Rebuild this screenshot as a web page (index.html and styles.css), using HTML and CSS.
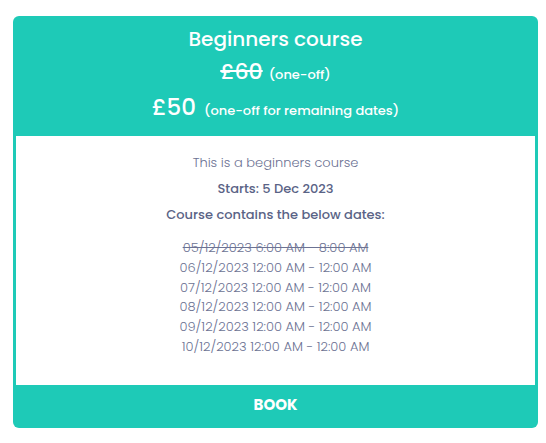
FILE: index.html
```html
<!DOCTYPE html>
<html lang="en">
<head>
    <meta charset="UTF-8">
    <meta name="viewport" content="width=device-width, initial-scale=1.0">
    <title>Beginners course</title>
    <link rel="stylesheet" href="styles.css">
</head>
<body>
    <div class="course-card">
        <div class="course-header">
            <h2 class="course-title">Beginners course</h2>
            <div class="price-row">
                <span class="price old-price">£60</span>
                <span class="price-note">(one-off)</span>
            </div>
            <div class="price-row current">
                <span class="price">£50</span>
                <span class="price-note">(one-off for remaining dates)</span>
            </div>
        </div>

        <div class="course-body">
            <p class="description">This is a beginners course</p>
            <p class="info">Starts: 5 Dec 2023</p>
            <p class="info">Course contains the below dates:</p>
            <ul class="dates">
                <li class="past">05/12/2023 6:00 AM - 8:00 AM</li>
                <li>06/12/2023 12:00 AM - 12:00 AM</li>
                <li>07/12/2023 12:00 AM - 12:00 AM</li>
                <li>08/12/2023 12:00 AM - 12:00 AM</li>
                <li>09/12/2023 12:00 AM - 12:00 AM</li>
                <li>10/12/2023 12:00 AM - 12:00 AM</li>
            </ul>
        </div>

        <button class="book-btn">BOOK</button>
    </div>
</body>
</html>
```

FILE: styles.css
```css
* {
    box-sizing: border-box;
}

body {
    font-family: 'Poppins', 'Inter', 'Noto Sans', sans-serif;
    background: #fff;
    margin: 0;
    padding: 16px 8px 0 13px;
}

.course-card {
    background: #1ecab7;
    border-radius: 6px;
    padding: 0 3px;
    display: flex;
    flex-direction: column;
    height: 412px;
}

.course-header {
    color: #fff;
    text-align: center;
    height: 120px;
    padding-top: 9px;
}

.course-title {
    margin: 0;
    font-size: 20px;
    font-weight: 500;
    line-height: 28px;
}

.price-row {
    display: flex;
    justify-content: center;
    align-items: baseline;
    gap: 6px;
    margin-top: 4px;
    line-height: 30px;
}

.price-row.current {
    margin-top: 2px;
    gap: 8px;
}

.price {
    font-size: 22px;
    font-weight: 500;
}

.current .price {
    font-size: 23px;
}

.old-price {
    text-decoration: line-through;
}

.price-note {
    font-size: 13px;
    font-weight: 500;
}

.course-body {
    background: #fff;
    flex: 1;
    text-align: center;
    padding-top: 18px;
    color: #5a6386;
    font-size: 13px;
}

.course-body p {
    margin: 0 0 8px;
    line-height: 18px;
}

.description {
    font-weight: 300;
    color: #6c7293;
}

.info {
    font-weight: 500;
}

.dates {
    list-style: none;
    margin: 14px 0 0;
    padding: 0;
    font-weight: 300;
    color: #6c7293;
}

.dates li {
    line-height: 19.8px;
}

.past {
    text-decoration: line-through;
}

.book-btn {
    background: none;
    border: none;
    color: #fff;
    font-family: inherit;
    font-size: 15px;
    font-weight: 700;
    height: 43px;
    padding: 0 0 4px;
    cursor: pointer;
}
```
